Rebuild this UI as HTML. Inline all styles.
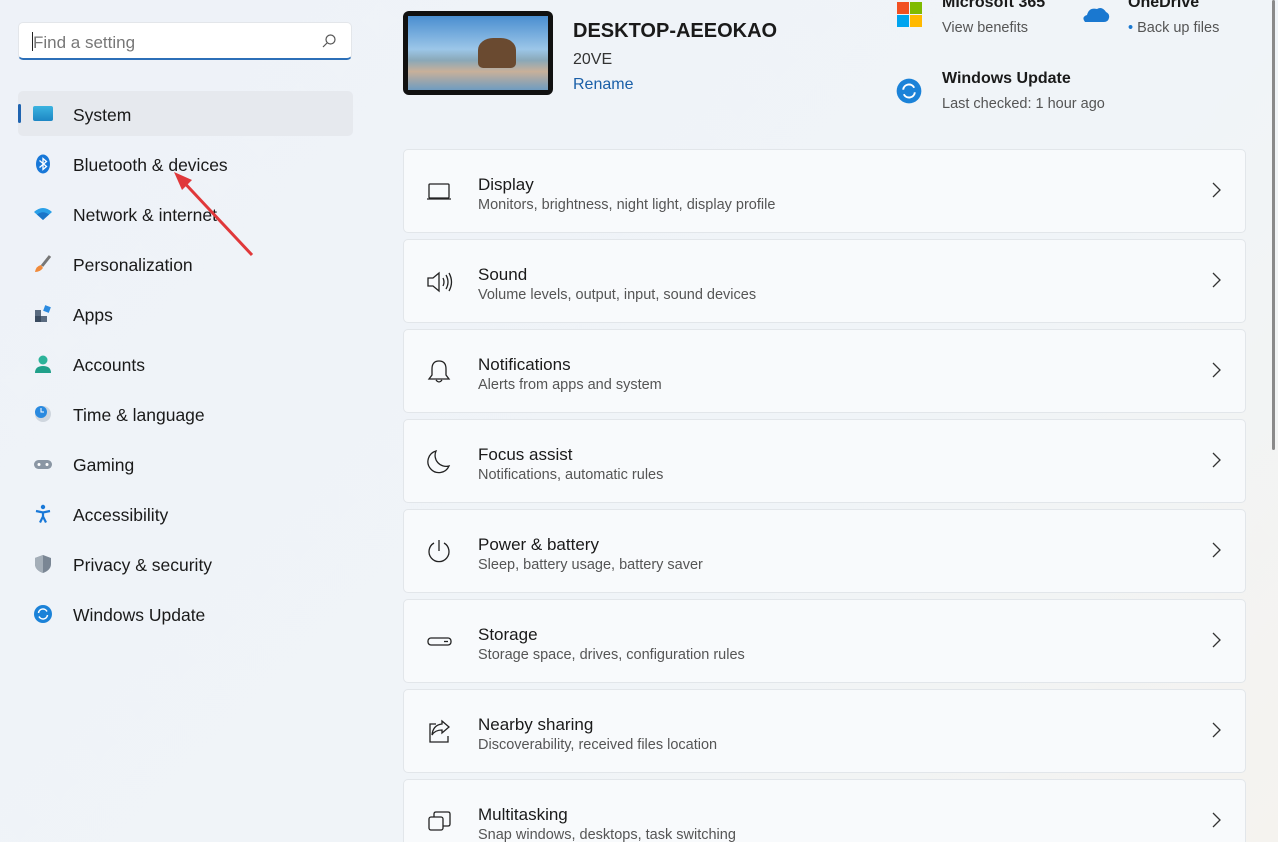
<!DOCTYPE html><html><head><style>
html,body{margin:0;width:1278px;height:842px;overflow:hidden}
body{font-family:"Liberation Sans",sans-serif;background:linear-gradient(135deg,#eef2f8 0%,#f0f4f8 60%,#f5f3ef 100%);position:relative;color:#1a1a1a}
.abs{position:absolute}
.search{left:18px;top:22px;width:334px;height:38px;background:#fff;border-radius:5px;border:1px solid #e3e6ea;border-bottom:2px solid #2c6fb8;box-sizing:border-box}
.search span{position:absolute;left:14px;top:10px;font-size:17px;color:#777}
.search i{position:absolute;left:13px;top:9px;width:1px;height:19px;background:#222}
.nav{left:18px;width:335px;height:45px;font-size:17.5px}
.nav .t{position:absolute;left:55px;top:14px}
.nav .ic{position:absolute;left:15px;top:13px;width:20px;height:20px}
.sel{background:#e6e9ee;border-radius:5px}
.card{left:403px;width:843px;height:84px;background:#f8fafc;border:1px solid #e2e6ea;border-radius:5px;box-sizing:border-box}
.card .h{position:absolute;left:74px;top:25px;font-size:17px}
.card .s{position:absolute;left:74px;top:47px;font-size:14.5px;color:#555}
.card svg.i{position:absolute;left:22px;top:28px}
.card .c{position:absolute;right:24px;top:32px}
</style></head><body>
<div class="abs search"><i></i><span>Find a setting</span>
<svg class="abs" style="left:302px;top:10px" width="16" height="16" viewBox="0 0 16 16"><circle cx="9.5" cy="6.5" r="4.5" fill="none" stroke="#555" stroke-width="1.2"/><path d="M6 10L2 14" stroke="#555" stroke-width="1.2"/></svg></div>

<div class="abs nav sel" style="top:91px"><div class="abs" style="left:0;top:13px;width:3px;height:19px;background:#1f64b0;border-radius:2px"></div><div class="ic" style="top:15px;height:15px;background:linear-gradient(#3bb3e0,#1d86c4);border-radius:2px"></div><span class="t">System</span></div>
<div class="abs nav" style="top:141px"><svg class="ic" viewBox="0 0 20 20"><ellipse cx="10" cy="10" rx="7" ry="9.5" fill="#1878d8"/><path d="M6.5 6.5l7 6-3.5 3V4.5l3.5 3-7 6" stroke="#fff" stroke-width="1.3" fill="none"/></svg><span class="t">Bluetooth &amp; devices</span></div>
<div class="abs nav" style="top:191px"><svg class="ic" viewBox="0 0 20 20"><path d="M1 8Q10 0 19 8L10 16Z" fill="#2aa0e8"/><path d="M4 10.5Q10 6 16 10.5L10 16Z" fill="#1a75c8"/></svg><span class="t">Network &amp; internet</span></div>
<div class="abs nav" style="top:241px"><svg class="ic" viewBox="0 0 20 20"><path d="M17 2L9 12" stroke="#777" stroke-width="3"/><path d="M8 11Q3 12 2 18Q7 18 10 14Z" fill="#f08a3a"/></svg><span class="t">Personalization</span></div>
<div class="abs nav" style="top:291px"><svg class="ic" viewBox="0 0 20 20"><rect x="2" y="6" width="6" height="6" fill="#5a6b80"/><rect x="2" y="12" width="6" height="6" fill="#3a4b60"/><rect x="8" y="12" width="6" height="6" fill="#5a6b80"/><rect x="11" y="2" width="6" height="6" fill="#2a8ae0" transform="rotate(20 14 5)"/></svg><span class="t">Apps</span></div>
<div class="abs nav" style="top:341px"><svg class="ic" viewBox="0 0 20 20"><circle cx="10" cy="6" r="4.5" fill="#2cb39a"/><path d="M2 19Q2 12 10 12Q18 12 18 19Z" fill="#20a08a"/></svg><span class="t">Accounts</span></div>
<div class="abs nav" style="top:391px"><svg class="ic" viewBox="0 0 20 20"><circle cx="10" cy="10" r="8" fill="#cfd6de"/><circle cx="8" cy="8" r="6" fill="#2a8ae0"/><path d="M8 4v4h3" stroke="#fff" fill="none"/></svg><span class="t">Time &amp; language</span></div>
<div class="abs nav" style="top:441px"><svg class="ic" viewBox="0 0 20 20"><rect x="1" y="6" width="18" height="9" rx="4.5" fill="#8a96a4"/><circle cx="6" cy="10.5" r="1.5" fill="#fff"/><circle cx="14" cy="10.5" r="1.5" fill="#fff"/></svg><span class="t">Gaming</span></div>
<div class="abs nav" style="top:491px"><svg class="ic" viewBox="0 0 20 20"><circle cx="10" cy="3" r="2.2" fill="#1878d8"/><path d="M3 7l7 1.5 7-1.5M10 8.5v4l-3 6M10 12.5l3 6" stroke="#1878d8" stroke-width="2.2" fill="none"/></svg><span class="t">Accessibility</span></div>
<div class="abs nav" style="top:541px"><svg class="ic" viewBox="0 0 20 20"><path d="M10 1L18 4V10Q18 16 10 19Q2 16 2 10V4Z" fill="#7a8694"/><path d="M10 1V19Q2 16 2 10V4Z" fill="#a4aeb8"/></svg><span class="t">Privacy &amp; security</span></div>
<div class="abs nav" style="top:591px"><svg class="ic" viewBox="0 0 20 20"><circle cx="10" cy="10" r="9" fill="#1b82d8"/><path d="M5.5 9A4.5 4.5 0 0 1 14 7.5M14.5 11A4.5 4.5 0 0 1 6 12.5" stroke="#fff" stroke-width="1.5" fill="none"/></svg><span class="t">Windows Update</span></div>

<svg class="abs" style="left:170px;top:170px" width="90" height="90"><path d="M82 85L8 6" stroke="#e0383a" stroke-width="3"/><path d="M4 2L22 10L12 20Z" fill="#e0383a"/></svg>

<div class="abs" style="left:403px;top:11px;width:150px;height:84px;background:#111;border-radius:6px"><div class="abs" style="left:5px;top:5px;width:140px;height:74px;background:linear-gradient(#4a8ed0 0%,#9cc6e8 45%,#8aa8b8 60%,#c8b09a 75%,#6f9cc0 100%)"><div class="abs" style="left:70px;top:22px;width:38px;height:30px;background:#6a4a30;border-radius:40% 40% 5px 5px"></div></div></div>
<div class="abs" style="left:573px;top:20px;font-size:20px;font-weight:bold;color:#1a1a1a">DESKTOP-AEEOKAO</div>
<div class="abs" style="left:573px;top:51px;font-size:16px;color:#333">20VE</div>
<div class="abs" style="left:573px;top:76px;font-size:16px;color:#1a5fa8">Rename</div>

<svg class="abs" style="left:897px;top:2px" width="25" height="25"><rect x="0" y="0" width="12" height="12" fill="#f25022"/><rect x="13" y="0" width="12" height="12" fill="#7fba00"/><rect x="0" y="13" width="12" height="12" fill="#00a4ef"/><rect x="13" y="13" width="12" height="12" fill="#ffb900"/></svg>
<div class="abs" style="left:942px;top:-6px;font-size:16px;font-weight:bold">Microsoft 365</div>
<div class="abs" style="left:942px;top:20px;font-size:14.5px;color:#555">View benefits</div>
<svg class="abs" style="left:1082px;top:5px" width="28" height="18"><path d="M3 17Q-1 12 5 10Q7 2 15 4Q20 1 24 7Q28 9 27 13Q26 17 22 17Z" fill="#1a78d0"/></svg>
<div class="abs" style="left:1128px;top:-6px;font-size:16px;font-weight:bold">OneDrive</div>
<div class="abs" style="left:1128px;top:20px;font-size:14.5px;color:#555"><span style="color:#1a78d0">•</span> Back up files</div>
<svg class="abs" style="left:896px;top:78px" width="26" height="26" viewBox="0 0 20 20"><circle cx="10" cy="10" r="9.5" fill="#1b82d8"/><path d="M5.5 9A4.5 4.5 0 0 1 14 7.5M14.5 11A4.5 4.5 0 0 1 6 12.5" stroke="#fff" stroke-width="1.5" fill="none"/></svg>
<div class="abs" style="left:942px;top:70px;font-size:16px;font-weight:bold">Windows Update</div>
<div class="abs" style="left:942px;top:96px;font-size:14.5px;color:#555">Last checked: 1 hour ago</div>
<div class="abs" style="left:1272px;top:0;width:3px;height:450px;background:#8a8a8a;border-radius:2px"></div>

<div class="abs card" style="top:149px"><svg class="i" width="28" height="28" viewBox="0 0 28 28" fill="none" stroke="#222" stroke-width="1.3"><rect x="3" y="6" width="20" height="14" rx="1"/><path d="M1 21h24"/></svg><div class="h">Display</div><div class="s">Monitors, brightness, night light, display profile</div><svg class="c" width="10" height="16"><path d="M2 1l7 7-7 7" stroke="#333" stroke-width="1.3" fill="none"/></svg></div>
<div class="abs card" style="top:239px"><svg class="i" width="28" height="28" viewBox="0 0 28 28" fill="none" stroke="#222" stroke-width="1.3"><path d="M2 10h5l6-5v18l-6-5H2z M17 10q2 4 0 8M20 7q4 7 0 14M23 5q5 9 0 18"/></svg><div class="h">Sound</div><div class="s">Volume levels, output, input, sound devices</div><svg class="c" width="10" height="16"><path d="M2 1l7 7-7 7" stroke="#333" stroke-width="1.3" fill="none"/></svg></div>
<div class="abs card" style="top:329px"><svg class="i" width="28" height="28" viewBox="0 0 28 28" fill="none" stroke="#222" stroke-width="1.3"><path d="M13 3q-7 0-7 8v6l-3 4h20l-3-4v-6q0-8-7-8zM10 22q3 4 6 0"/></svg><div class="h">Notifications</div><div class="s">Alerts from apps and system</div><svg class="c" width="10" height="16"><path d="M2 1l7 7-7 7" stroke="#333" stroke-width="1.3" fill="none"/></svg></div>
<div class="abs card" style="top:419px"><svg class="i" width="28" height="28" viewBox="0 0 28 28" fill="none" stroke="#222" stroke-width="1.3"><path d="M10 3a11 11 0 1 0 13 15A11 11 0 0 1 10 3z"/></svg><div class="h">Focus assist</div><div class="s">Notifications, automatic rules</div><svg class="c" width="10" height="16"><path d="M2 1l7 7-7 7" stroke="#333" stroke-width="1.3" fill="none"/></svg></div>
<div class="abs card" style="top:509px"><svg class="i" width="28" height="28" viewBox="0 0 28 28" fill="none" stroke="#222" stroke-width="1.3"><path d="M13 2v11M8 5a10 10 0 1 0 10 0"/></svg><div class="h">Power &amp; battery</div><div class="s">Sleep, battery usage, battery saver</div><svg class="c" width="10" height="16"><path d="M2 1l7 7-7 7" stroke="#333" stroke-width="1.3" fill="none"/></svg></div>
<div class="abs card" style="top:599px"><svg class="i" width="28" height="28" viewBox="0 0 28 28" fill="none" stroke="#222" stroke-width="1.3"><rect x="2" y="10" width="23" height="7" rx="3"/><path d="M18 13.5h4"/></svg><div class="h">Storage</div><div class="s">Storage space, drives, configuration rules</div><svg class="c" width="10" height="16"><path d="M2 1l7 7-7 7" stroke="#333" stroke-width="1.3" fill="none"/></svg></div>
<div class="abs card" style="top:689px"><svg class="i" width="28" height="28" viewBox="0 0 28 28" fill="none" stroke="#222" stroke-width="1.3"><path d="M10 6H4v18h18v-6M16 3l7 6-7 6v-3q-7 0-10 5q1-10 10-11z"/></svg><div class="h">Nearby sharing</div><div class="s">Discoverability, received files location</div><svg class="c" width="10" height="16"><path d="M2 1l7 7-7 7" stroke="#333" stroke-width="1.3" fill="none"/></svg></div>
<div class="abs card" style="top:779px;height:63px;border-bottom:none;border-radius:5px 5px 0 0"><svg class="i" width="28" height="28" viewBox="0 0 28 28" fill="none" stroke="#222" stroke-width="1.3"><rect x="3" y="9" width="14" height="13" rx="2"/><path d="M8 9V6q0-2 2-2h12q2 0 2 2v10q0 2-2 2h-5"/></svg><div class="h">Multitasking</div><div class="s">Snap windows, desktops, task switching</div><svg class="c" width="10" height="16"><path d="M2 1l7 7-7 7" stroke="#333" stroke-width="1.3" fill="none"/></svg></div>
</body></html>
